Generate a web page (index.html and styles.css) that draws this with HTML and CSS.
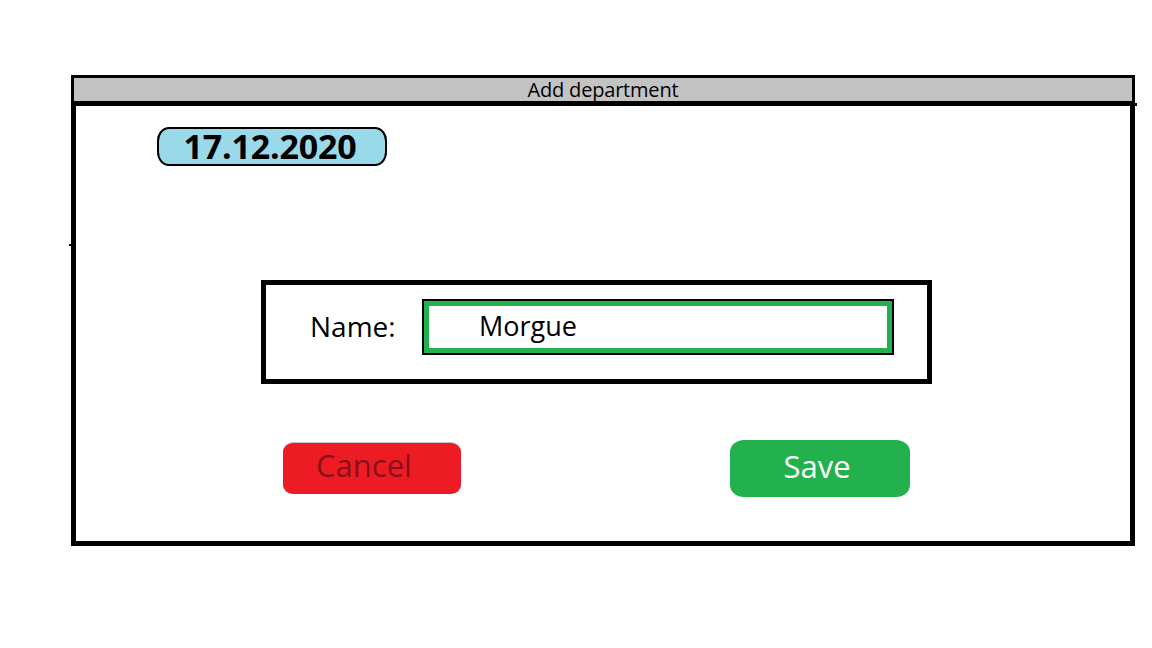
FILE: index.html
```html
<!DOCTYPE html>
<html lang="en">
<head>
<meta charset="utf-8">
<title>Add department</title>
<link rel="stylesheet" href="styles.css">
</head>
<body>
  <div class="dialog">
    <div class="titlebar">Add department</div>
    <div class="dialog-body">
      <div class="date-badge">17.12.2020</div>
      <div class="name-panel">
        <span class="name-label">Name:</span>
        <div class="name-input"><span class="name-value">Morgue</span></div>
      </div>
      <div class="actions">
        <button class="btn btn-cancel" type="button">Cancel</button>
        <button class="btn btn-save" type="button">Save</button>
      </div>
    </div>
  </div>
</body>
</html>
```

FILE: styles.css
```css
html, body {
  margin: 0;
  padding: 0;
  background: #ffffff;
}

body {
  font-family: "Open Sans", "Noto Sans", sans-serif;
  color: #000000;
}

.dialog {
  width: 1064px;
  margin: 75px 0 0 71px;
}

.titlebar {
  box-sizing: border-box;
  height: 26px;
  border: 3px solid #000000;
  border-bottom: none;
  background: #c3c3c3;
  font-size: 20px;
  line-height: 23px;
  text-align: center;
  letter-spacing: -0.2px;
}

.dialog-body {
  position: relative;
  box-sizing: border-box;
  height: 445px;
  border: 5px solid #000000;
}

.dialog-body::before {
  content: "";
  position: absolute;
  left: -7px;
  top: 138px;
  width: 2px;
  height: 2px;
  background: #000000;
}

.dialog-body::after {
  content: "";
  position: absolute;
  right: -7px;
  top: -3px;
  width: 2px;
  height: 3px;
  background: #000000;
}

.date-badge {
  box-sizing: border-box;
  width: 230px;
  height: 39px;
  margin: 21px 0 0 81px;
  border: 2px solid #000000;
  border-radius: 12px / 14px;
  background: #99d9ea;
  font-family: "Open Sans", sans-serif;
  font-weight: 700;
  font-size: 34px;
  line-height: 35px;
  text-align: center;
  letter-spacing: -0.2px;
  padding-right: 4px;
}

.name-panel {
  box-sizing: border-box;
  display: flex;
  align-items: flex-start;
  width: 671px;
  height: 104px;
  margin: 114px 0 0 185px;
  padding: 14px 0 0 44px;
  border: 5px solid #000000;
}

.name-label {
  width: 112px;
  font-size: 28px;
  line-height: 54px;
  flex-shrink: 0;
}

.name-input {
  box-sizing: border-box;
  width: 472px;
  height: 56px;
  border: 2px solid #000000;
}

.name-value {
  display: block;
  box-sizing: border-box;
  height: 52px;
  border: 5px solid #22b14c;
  padding-left: 50px;
  font-size: 27px;
  line-height: 40px;
}

.actions {
  display: flex;
  align-items: center;
  margin-top: 56px;
  height: 57px;
}

.btn {
  box-sizing: border-box;
  border: none;
  padding: 0;
  font-family: "Open Sans", sans-serif;
  font-size: 31px;
  line-height: 40px;
  cursor: pointer;
}

.btn-cancel {
  width: 178px;
  height: 51px;
  margin-left: 207px;
  padding: 0 16px 8px 0;
  border-radius: 10px / 9px;
  background: #ed1c24;
  color: #8c1019;
  box-shadow: 0 -1px 0 #c3c3c3;
  text-align: center;
}

.btn-save {
  width: 180px;
  height: 57px;
  margin-left: 269px;
  padding: 0 6px 5px 0;
  border-radius: 14px / 12px;
  background: #22b14c;
  color: #ffffff;
  text-align: center;
}
```
